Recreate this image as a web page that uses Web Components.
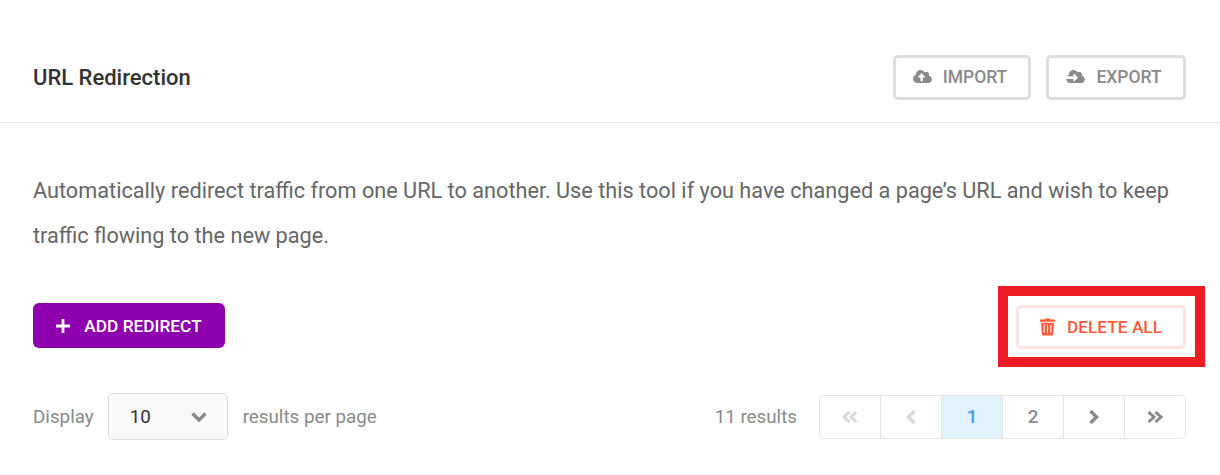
<!DOCTYPE html>
<html>
<head>
<meta charset="utf-8">
<style>
html, body { margin: 0; background: #fff; font-family: Roboto, "Liberation Sans", sans-serif; }
</style>
</head>
<body>
<redirect-page></redirect-page>

<script>
const CLOUD = 'M537.6 226.6c4.1-10.7 6.4-22.4 6.4-34.6 0-53-43-96-96-96-19.7 0-38.1 6-53.3 16.2C367 64.2 315.3 32 256 32c-88.4 0-160 71.6-160 160 0 2.7.1 5.4.2 8.1C40.2 219.8 0 273.2 0 336c0 79.5 64.5 144 144 144h368c70.7 0 128-57.3 128-128 0-61.9-44-113.6-102.4-125.4z';
const ICONS = {
    upload: `<svg viewBox="0 0 640 512" width="19" height="15"><path fill="currentColor" d="${CLOUD}"/><path fill="#fff" d="M393.4 288H328v112c0 8.8-7.2 16-16 16h-48c-8.8 0-16-7.2-16-16V288h-65.4c-14.3 0-21.4-17.2-11.3-27.3l105.4-105.4c6.2-6.2 16.4-6.2 22.6 0l105.4 105.4c10.1 10.1 2.9 27.3-11.3 27.3z"/></svg>`,
    download: `<svg viewBox="0 0 640 512" width="19" height="15"><path fill="currentColor" d="${CLOUD}"/><path fill="#fff" d="M-10 245H250v-75a14 14 0 0 1 24-10l122 125a14 14 0 0 1 0 20L274 430a14 14 0 0 1-24-10v-75H-10z"/></svg>`,
    trash: '<svg viewBox="0 0 448 512" width="15" height="18"><path fill="currentColor" d="M432 32H312l-9-19A24 24 0 0 0 281 0H167a24 24 0 0 0-22 13l-9 19H16A16 16 0 0 0 0 48v32a16 16 0 0 0 16 16h416a16 16 0 0 0 16-16V48a16 16 0 0 0-16-16zM53 467a48 48 0 0 0 48 45h246a48 48 0 0 0 48-45l21-339H32zm255-275a16 16 0 0 1 32 0v224a16 16 0 0 1-32 0zm-100 0a16 16 0 0 1 32 0v224a16 16 0 0 1-32 0zm-100 0a16 16 0 0 1 32 0v224a16 16 0 0 1-32 0z"/></svg>',
    plus: '<svg viewBox="0 0 14 14" width="14" height="14"><path fill="none" stroke="currentColor" stroke-width="2.8" d="M7 0v14M0 7h14"/></svg>',
    down: '<svg viewBox="0 0 16 10" width="16" height="10"><path fill="none" stroke="currentColor" stroke-width="3.4" d="M1.500 1.500 8 8l6.500-6.500"/></svg>',
    first: '<svg viewBox="0 0 16 12" width="16" height="12"><path fill="none" stroke="currentColor" stroke-width="3" d="M7.500 1 2 6l5.500 5M14.500 1 9 6l5.500 5"/></svg>',
    prev: '<svg viewBox="0 0 10 14" width="10" height="14"><path fill="none" stroke="currentColor" stroke-width="3.400" d="M8.500 1 2.500 7l6 6"/></svg>',
    next: '<svg viewBox="0 0 10 14" width="10" height="14"><path fill="none" stroke="currentColor" stroke-width="3.400" d="m1.500 1 6 6-6 6"/></svg>',
    last: '<svg viewBox="0 0 16 12" width="16" height="12"><path fill="none" stroke="currentColor" stroke-width="3" d="M1.500 1 7 6l-5.500 5M8.500 1 14 6l-5.500 5"/></svg>'
};

// outlined / filled button, variant comes from the attribute
class ActionButton extends HTMLElement {
    constructor() {
        super();
        const sroot = this.attachShadow({mode: 'open'});
        const icon = ICONS[this.getAttribute('icon')] || '';
        sroot.innerHTML = `<style>
                :host{
                    display: inline-flex;
                    align-items: center;
                    justify-content: center;
                    gap: 11px;
                    box-sizing: border-box;
                    height: 45px;
                    padding: 0 4px 2px 0;
                    border: 3px solid #dedede;
                    border-radius: 5px;
                    color: #8a8a8a;
                    font-size: 17.5px;
                    font-weight: 500;
                    background: #fff;
                }
                :host([variant="danger"]){
                    height: 44px;
                    padding: 0;
                    gap: 12px;
                    border-color: #ffe3e3;
                    color: #ff5a3c;
                    font-size: 17.3px;
                }
                :host([variant="primary"]){
                    padding: 0;
                    border: 0;
                    background: #8e00ae;
                    color: #fff;
                    gap: 14px;
                    font-size: 17.3px;
                }
                svg{ display: block; }
            </style>
            ${icon}<slot></slot>`;
    }
}
customElements.define('action-button', ActionButton);

class PageHeader extends HTMLElement {
    constructor() {
        super();
        const sroot = this.attachShadow({mode: 'open'});
        sroot.innerHTML = `<style>
                :host{
                    display: flex;
                    align-items: center;
                    justify-content: space-between;
                    box-sizing: border-box;
                    height: 123px;
                    padding: 55px 34px 22px 33px;
                    border-bottom: 1px solid #e6e6e6;
                }
                h1{
                    margin: 0;
                    font-size: 22px;
                    font-weight: 500;
                    color: #333;
                }
                .actions{ display: flex; gap: 15px; }
            </style>
            <h1><slot></slot></h1>
            <div class="actions"><slot name="actions"></slot></div>`;
    }
}
customElements.define('page-header', PageHeader);

class PerPage extends HTMLElement {
    constructor() {
        super();
        const sroot = this.attachShadow({mode: 'open'});
        sroot.innerHTML = `<style>
                :host{
                    display: flex;
                    align-items: center;
                    font-size: 18.8px;
                    color: #8a8a8a;
                }
                .select{
                    display: flex;
                    align-items: center;
                    justify-content: space-between;
                    box-sizing: border-box;
                    width: 120px;
                    height: 47px;
                    margin: 0 15px 0 14px;
                    padding: 0 20px 0 21px;
                    border: 1px solid #ddd;
                    border-radius: 5px;
                    background: #f9f9f9;
                    color: #333;
                }
                .select svg{ color: #8a8a8a; display: block; }
            </style>
            <span>Display</span>
            <div class="select"><span>10</span>${ICONS.down}</div>
            <span>results per page</span>`;
    }
}
customElements.define('per-page', PerPage);

class PagerNav extends HTMLElement {
    constructor() {
        super();
        const sroot = this.attachShadow({mode: 'open'});
        const cells = [
            ['first', 'off'], ['prev', 'off'], ['1', 'on'], ['2', ''], ['next', ''], ['last', '']
        ];
        sroot.innerHTML = `<style>
                :host{
                    display: flex;
                    align-items: center;
                    gap: 22px;
                    font-size: 18.8px;
                    color: #8a8a8a;
                }
                .pages{
                    display: flex;
                    height: 44px;
                    box-sizing: border-box;
                    border: 1px solid #e4e4e4;
                    border-radius: 5px;
                    overflow: hidden;
                }
                .pages div{
                    display: flex;
                    align-items: center;
                    justify-content: center;
                    box-sizing: border-box;
                    width: 61px;
                    border-left: 1px solid #e4e4e4;
                    font-weight: 500;
                }
                .pages div:first-child{ border-left: 0; width: 60px; }
                .pages .off{ color: #d9d9d9; }
                .pages .on{ background: #e1f4fe; color: #3d9df5; }
            </style>
            <span><slot></slot></span>
            <div class="pages">
                ${cells.map(([name, cls]) => `<div class="${cls}">${ICONS[name] || name}</div>`).join('')}
            </div>`;
    }
}
customElements.define('pager-nav', PagerNav);

class RedirectPage extends HTMLElement {
    constructor() {
        super();
        const sroot = this.attachShadow({mode: 'open'});
        sroot.innerHTML = `<style>
                :host{
                    display: block;
                    position: relative;
                    height: 475px;
                    overflow: hidden;
                    font-family: Roboto, "Liberation Sans", sans-serif;
                }
                .body{ padding: 45px 34px 0 33px; }
                p{
                    margin: 0;
                    font-size: 21.7px;
                    line-height: 45px;
                    color: #666;
                }
                .row{
                    display: flex;
                    align-items: center;
                    justify-content: space-between;
                }
                .buttons{ margin-top: 45px; align-items: flex-start; }
                .list{ margin-top: 44px; }
                .add{ width: 192px; border-radius: 6px; }
                .del{ width: 170px; margin-top: 2px; }
                .imp{ width: 138px; }
                .exp{ width: 140px; }
                /* annotation frame sits on top of the page */
                .mark{
                    position: absolute;
                    left: 998px;
                    top: 286px;
                    width: 207px;
                    height: 81px;
                    box-sizing: border-box;
                    border: 10px solid #ed1c24;
                }
            </style>
            <page-header>URL Redirection
                <action-button slot="actions" class="imp" icon="upload">IMPORT</action-button>
                <action-button slot="actions" class="exp" icon="download">EXPORT</action-button>
            </page-header>
            <div class="body">
                <p>Automatically redirect traffic from one URL to another. Use this tool if you have changed a page’s URL and wish to keep traffic flowing to the new page.</p>
                <div class="row buttons">
                    <action-button class="add" variant="primary" icon="plus">ADD REDIRECT</action-button>
                    <action-button class="del" variant="danger" icon="trash">DELETE ALL</action-button>
                </div>
                <div class="row list">
                    <per-page></per-page>
                    <pager-nav>11 results</pager-nav>
                </div>
            </div>
            <div class="mark"></div>`;
    }
}
customElements.define('redirect-page', RedirectPage);
</script>
</body>
</html>
